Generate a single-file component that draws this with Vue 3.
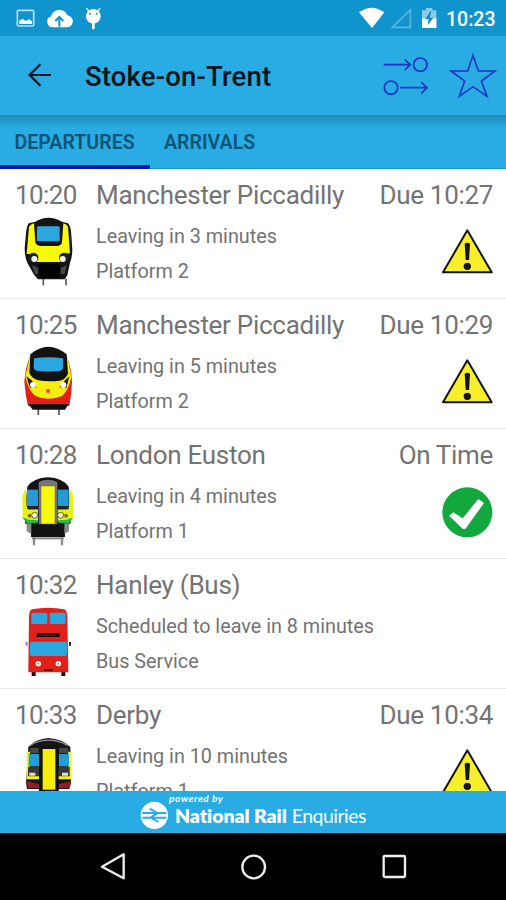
<script setup>
const rows = [
  { time: '10:20', name: 'Manchester Piccadilly', info: 'Leaving in 3 minutes', place: 'Platform 2', status: 'Due 10:27', icon: 'voyager', state: 'late' },
  { time: '10:25', name: 'Manchester Piccadilly', info: 'Leaving in 5 minutes', place: 'Platform 2', status: 'Due 10:29', icon: 'pendolino', state: 'late' },
  { time: '10:28', name: 'London Euston', info: 'Leaving in 4 minutes', place: 'Platform 1', status: 'On Time', icon: 'midland', state: 'ok' },
  { time: '10:32', name: 'Hanley (Bus)', info: 'Scheduled to leave in 8 minutes', place: 'Bus Service', status: '', icon: 'bus', state: '' },
  { time: '10:33', name: 'Derby', info: 'Leaving in 10 minutes', place: 'Platform 1', status: 'Due 10:34', icon: 'sprinter', state: 'late' },
]
</script>

<template>
  <div class="screen">
    <div class="statusbar">
      <svg class="sys-left" width="110" height="36" viewBox="0 0 330 108">
        <rect x="52" y="31" width="49" height="47" rx="3" fill="none" stroke="#b9e0f3" stroke-width="5" />
        <path d="M58 72V62L68 56L77 63L88 58L96 64V72Z" fill="#fff" />
        <path d="M158 82A17 17 0 0 1 153 49A26 26 0 0 1 202 46A18 18 0 0 1 199 82Z" fill="#fff" />
        <path d="M178 80V53M166 63L178 51L190 63" fill="none" stroke="#1094cd" stroke-width="6" />
        <circle cx="280" cy="49" r="22" fill="#fff" />
        <path d="M266 34L260 24M294 34L300 24" stroke="#fff" stroke-width="4" />
        <rect x="276" y="68" width="8" height="20" rx="3" fill="#fff" />
        <circle cx="270" cy="41" r="3" fill="#1094cd" /><circle cx="290" cy="41" r="3" fill="#1094cd" />
      </svg>
      <div class="sys-right">
        <svg width="80" height="36" viewBox="51 0 240 108">
          <path d="M57 37Q95 9 133 37L96 84Z" fill="#fff" />
          <path d="M157 82L211 30V82Z" fill="none" stroke="#58b5de" stroke-width="5" />
          <path d="M246 31H258V24H277V31H289V84H246Z" fill="#8acbe7" />
          <path d="M246 55H289V84H246Z" fill="#fff" />
          <path d="M271 34L256 57H266L263 76L280 53H269L274 34Z" fill="#1088bd" />
        </svg>
        <span class="clock">10:23</span>
      </div>
    </div>

    <header class="appbar">
      <svg class="back" width="24" height="24" viewBox="0 0 72 72">
        <path d="M69 36H6M37 4L5 36L37 68" fill="none" stroke="#06141c" stroke-width="6.5" />
      </svg>
      <h1>Stoke-on-Trent</h1>
      <svg class="actions" width="121" height="50" viewBox="120 150 363 150">
        <g fill="none" stroke="#1c35c4" stroke-width="5">
          <path d="M131 191H210M194 175L211 191L194 207" />
          <circle cx="241" cy="191" r="20" />
          <circle cx="153" cy="260" r="20" />
          <path d="M181 260H260M244 243L261 260L244 277" />
          <path d="M399 163L415 210H465L424 240L441 286L399 257L358 286L374 240L333 210H383Z" />
        </g>
      </svg>
    </header>

    <nav class="tabs">
      <span class="tab active">DEPARTURES</span>
      <span class="tab">ARRIVALS</span>
    </nav>

    <main class="list">
      <article v-for="r in rows" :key="r.time" class="row">
        <div class="left">
          <div class="time">{{ r.time }}</div>
          <svg class="vehicle" width="76" height="84" viewBox="0 0 228 252">
            <g v-if="r.icon === 'voyager'">
              <path d="M100 206V226M168 206V226" stroke="#555" stroke-width="5" />
              <path d="M76 35Q115 12 156 35L174 40Q183 50 184 75L187 120Q186 145 180 158L172 196L164 208H84L72 194L52 158Q44 140 44 115L48 70Q50 48 56 40Z" fill="#141414" />
              <path d="M57 50Q62 42 72 40L76 98Q80 107 90 108H142Q155 106 156 96L160 40Q170 42 174 50L180 130H168L150 156H82L66 132H50Z" fill="#f8fa08" />
              <rect x="81" y="49" width="68" height="45" rx="4" fill="#2ba6df" />
              <circle cx="70" cy="143" r="15" fill="#222" /><circle cx="162" cy="143" r="15" fill="#222" />
              <circle cx="73" cy="147" r="9" fill="#f5f5f5" /><circle cx="158" cy="147" r="9" fill="#f5f5f5" />
              <path d="M66 165L84 174V192H75ZM170 165L152 174V192H164Z" fill="#484848" />
              <path d="M84 162H150V204H90Z" fill="#020202" />
            </g>
            <g v-else-if="r.icon === 'pendolino'">
              <path d="M85 205V225M147 205V225" stroke="#555" stroke-width="5" />
              <path d="M62 44Q115 4 168 44Q184 80 186 125Q184 165 178 198H54Q46 165 43 125Q46 80 62 44Z" fill="#e51e18" />
              <path d="M60 48H172L184 111Q176 150 157 167Q115 186 75 167Q53 148 46 108Z" fill="#f8ed12" />
              <path d="M61 43Q115 -2 170 43L174 101Q166 119 148 122Q115 126 84 121Q64 114 58 99Z" fill="#121212" />
              <path d="M72 55Q116 49 159 55V85Q157 93 149 93Q115 97 80 92Q71 90 71 82Z" fill="#2ba6df" />
              <path d="M49 109L65 121L80 142L60 144ZM178 109L165 121L148 142L169 144Z" fill="#181818" />
              <circle cx="69" cy="135" r="9" fill="#fff" /><circle cx="160" cy="135" r="9" fill="#fff" />
              <circle cx="114" cy="153" r="6" fill="#ec4212" />
              <path d="M55 192H176L165 209H68Z" fill="#111" />
            </g>
            <g v-else-if="r.icon === 'midland'">
              <path d="M72 198V226M156 198V226" stroke="#888" stroke-width="7" />
              <path d="M52 50Q70 24 114 22Q158 24 176 50L182 120V160L165 168V201H63V168L45 160V120Z" fill="#121212" />
              <path d="M48 52L37 78L38 148L52 154H84V118H56L50 108ZM179 52L190 78L189 148L175 154H143V118H171L177 108Z" fill="#e8f01a" />
              <rect x="51" y="59" width="33" height="49" fill="#249bd5" /><rect x="143" y="59" width="33" height="49" fill="#249bd5" />
              <path d="M52 108H84V118H52ZM143 108H176V118H143Z" fill="#222" />
              <path d="M86 36Q114 22 142 36V163H86Z" fill="#757575" />
              <rect x="94" y="49" width="40" height="112" fill="#f8fa08" />
              <circle cx="59" cy="137" r="6" fill="#77791b" /><circle cx="168" cy="137" r="6" fill="#77791b" />
              <circle cx="74" cy="136" r="10" fill="#77791b" /><circle cx="152" cy="136" r="10" fill="#77791b" />
              <circle cx="74" cy="136" r="7" fill="#fff" /><circle cx="152" cy="136" r="7" fill="#fff" />
              <path d="M38 142L56 149L83 151V159H49ZM189 142L171 149L145 151V159H178Z" fill="#25b750" />
              <path d="M50 160H64V192L50 184ZM163 160H177V184L163 192Z" fill="#888" />
              <path d="M66 205H161" stroke="#888" stroke-width="6" />
            </g>
            <g v-else-if="r.icon === 'bus'">
              <rect x="65" y="211" width="12" height="17" fill="#111" /><rect x="154" y="211" width="12" height="17" fill="#111" />
              <path d="M50 126V137" stroke="#888" stroke-width="6" /><path d="M180 126V137" stroke="#222" stroke-width="6" />
              <path d="M57 50Q58 30 66 28Q115 18 162 28Q171 30 172 50L175 217H55Z" fill="#df201b" />
              <rect x="64" y="38" width="48" height="34" rx="5" fill="#2ba6df" /><rect x="119" y="38" width="48" height="34" rx="5" fill="#2ba6df" />
              <rect x="80" y="99" width="69" height="12" fill="#151515" />
              <path d="M94 105H136" stroke="#60301f" stroke-width="3" />
              <rect x="60" y="125" width="111" height="43" rx="5" fill="#2ba6df" />
              <circle cx="85" cy="191" r="8" fill="#fff" /><circle cx="145" cy="191" r="8" fill="#fff" />
              <circle cx="85" cy="191" r="3" fill="#f06a4c" /><circle cx="145" cy="191" r="3" fill="#f06a4c" />
              <path d="M103 210H128" stroke="#641010" stroke-width="6" />
            </g>
            <g v-else transform="translate(0 -15)">
              <path d="M55 66Q75 42 115 39Q158 42 181 66L183 173L178 192H145V220H87V192H51L48 175Z" fill="#171717" />
              <path d="M60 61Q114 30 173 61" fill="none" stroke="#969696" stroke-width="4" />
              <path d="M50 80H60V126L90 130V163H50ZM183 80H174V126L144 130V163H183Z" fill="#f1f514" />
              <path d="M60 69H86V84H60ZM147 69H175V84H147Z" fill="#484848" />
              <rect x="56" y="87" width="31" height="37" fill="#249bd5" /><rect x="146" y="87" width="31" height="37" fill="#249bd5" />
              <path d="M54 125H88V154H54ZM145 125H179V154H145Z" fill="#383838" />
              <path d="M58 148H76M156 148H174" stroke="#ddd" stroke-width="9" />
              <path d="M87 61H146V205H87Z" fill="#111" /><rect x="98" y="72" width="38" height="122" fill="#f8ed08" />
              <path d="M48 169L87 177V189H54ZM184 169L147 177V189H178Z" fill="#991b2b" />
            </g>
          </svg>
        </div>
        <div class="middle">
          <div class="name">{{ r.name }}</div>
          <div class="info">{{ r.info }}</div>
          <div class="info">{{ r.place }}</div>
        </div>
        <div class="right">
          <div class="status">{{ r.status }}</div>
          <svg v-if="r.state === 'late'" class="badge" width="52" height="52" viewBox="36 20 156 156">
            <path d="M112 30L185 156H39Z" fill="#f8ef2c" stroke="#15150d" stroke-width="6" stroke-linejoin="round" />
            <path d="M104 70Q112 64 120 70L117 119H107Z" fill="#15150d" />
            <circle cx="112" cy="138" r="11" fill="#15150d" />
          </svg>
          <svg v-else-if="r.state === 'ok'" class="badge" width="52" height="52" viewBox="36 18 156 156">
            <circle cx="112" cy="94" r="75" fill="#13a83d" />
            <path d="M57 104L70 94L98 112L145 54L162 66L106 144H99Z" fill="#fff" />
          </svg>
        </div>
      </article>
    </main>

    <footer class="credit">
      <svg class="rail" width="30" height="30" viewBox="0 0 90 90">
        <circle cx="46" cy="46" r="41" fill="#fff" />
        <path d="M10 39H82M10 53H82M32 26L55 39L35 53L58 66" fill="none" stroke="#29abe4" stroke-width="6" />
      </svg>
      <div class="brand">
        <div class="powered">powered by</div>
        <div class="nre"><b>National Rail</b> <span class="enq">Enquiries</span></div>
      </div>
    </footer>

    <div class="navbar">
      <svg width="350" height="55" viewBox="0 0 1050 165">
        <g fill="none" stroke="#eee" stroke-width="7" stroke-linejoin="round">
          <path d="M66 80L131 43V115Z" />
          <circle cx="521" cy="81" r="34" />
          <rect x="911" y="48" width="64" height="63" rx="3" />
        </g>
      </svg>
    </div>
  </div>
</template>

<style>
body { margin: 0; }
</style>

<style scoped>
.screen {
  width: 506px;
  height: 900px;
  display: flex;
  flex-direction: column;
  overflow: hidden;
  background: #fff;
  font-family: Roboto, "Liberation Sans", sans-serif;
}
svg { display: block; flex: none; }
.statusbar {
  height: 36px;
  flex: none;
  display: flex;
  justify-content: space-between;
  background: #1094cd;
}
.sys-right { display: flex; padding-right: 11px; }
.clock {
  width: 49px;
  margin-left: 9px;
  line-height: 39px;
  font-size: 19.5px;
  font-weight: 500;
  color: #fff;
  white-space: nowrap;
}
.appbar {
  height: 79px;
  flex: none;
  display: flex;
  align-items: center;
  background: #29abe4;
}
.back { margin-left: 28px; margin-top: -1px; }
h1 {
  flex: 1;
  margin: 2px 0 0 33px;
  font-size: 27.5px;
  font-weight: 500;
  letter-spacing: 0.16px;
  color: #06141c;
  white-space: nowrap;
}
.actions { margin-right: 5px; }
.tabs {
  height: 53.5px;
  flex: none;
  display: flex;
  box-sizing: border-box;
  border-bottom: 1px solid #159bd4;
  background: linear-gradient(#1f86b4, #2595c7 4px, #29abe4 13px);
}
.tab {
  box-sizing: border-box;
  height: 53.5px;
  padding: 0 14px 0 14.5px;
  line-height: 56px;
  font-size: 19.6px;
  font-weight: 600;
  color: #0d5476;
  white-space: nowrap;
}
.active { width: 149.5px; border-bottom: 4px solid #0717b6; }
.list { height: 622.5px; flex: none; overflow: hidden; }
.row {
  height: 130px;
  box-sizing: border-box;
  border-bottom: 1px solid #e8e8e8;
  display: flex;
  padding: 11px 13px 0 10px;
  color: #737373;
}
.left { width: 86px; flex: none; }
.vehicle { margin-top: 0; }
.middle { flex: 1; }
.time, .name, .status {
  height: 30px;
  line-height: 30px;
  font-size: 26px;
  white-space: nowrap;
}
.name { letter-spacing: -0.28px; }
.status { letter-spacing: -0.32px; }
.time { padding-left: 5px; letter-spacing: -0.6px; }
.info {
  height: 35px;
  line-height: 35px;
  font-size: 19.8px;
  letter-spacing: 0;
  white-space: nowrap;
}
.name + .info { margin-top: 9px; }
.right { display: flex; flex-direction: column; align-items: flex-end; }
.badge { margin: 17px -1px 0 0; }
.credit {
  height: 42px;
  flex: none;
  display: flex;
  background: #29abe4;
  color: #fff;
}
.rail { margin: 9px 0 0 139px; }
.brand { font-family: Lato, sans-serif; white-space: nowrap; }
.powered {
  height: 13px;
  line-height: 15px;
  font-size: 10px;
  font-style: italic;
  font-weight: 700;
  letter-spacing: 0.55px;
}
.nre { padding-left: 6px; line-height: 23px; font-size: 19.5px; }
.nre b { letter-spacing: -0.08px; font-weight: 800; }
.enq { font-weight: 400; letter-spacing: -0.5px; }
.navbar {
  flex: 1;
  background: #000;
  padding: 7px 0 0 80px;
}
</style>
